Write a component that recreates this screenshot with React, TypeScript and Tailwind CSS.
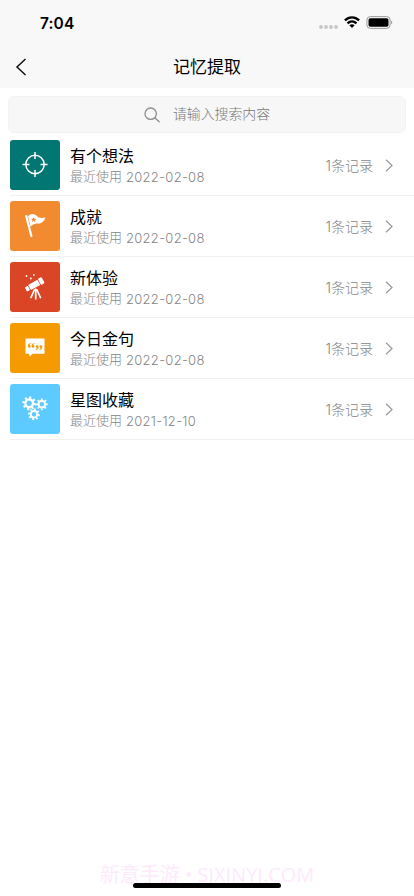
import type { ReactNode } from 'react'

const cjk = "font-['Noto_Sans_CJK_SC',sans-serif]"

function StatusBar() {
  return (
    <div className="flex h-11 items-center pl-10 pr-[21px] pt-0.5">
      <span className="mt-px font-['Inter',sans-serif] text-[15.5px] font-semibold leading-5 tracking-[0.1px] text-black">7:04</span>
      <div className="ml-auto flex items-center">
        <svg width="19" height="4" viewBox="0 0 19 4" className="mt-[7px]" fill="#c6c6c6">
          <circle cx="2" cy="2" r="1.9" />
          <circle cx="7" cy="2" r="1.9" />
          <circle cx="12" cy="2" r="1.9" />
          <circle cx="17" cy="2" r="1.9" />
        </svg>
        <svg width="16" height="12" viewBox="0 0 16 12" className="-mt-0.5 ml-1.5" fill="none" stroke="#000" strokeWidth="2.4">
          <path d="M.9 4.4C5 .3 11 .3 15.1 4.4" />
          <path d="M3.5 7.3C6.2 4.8 9.8 4.8 12.5 7.3" />
          <path d="M8 12 5.4 9.3C7 8 9 8 10.6 9.3Z" fill="#000" stroke="none" />
        </svg>
        <svg width="27" height="13" viewBox="0 0 27 13" className="-mt-px ml-1.5">
          <rect x=".9" y=".6" width="23.2" height="11.8" rx="3.4" fill="none" stroke="#9b9b9b" />
          <rect x="2.5" y="2.2" width="20" height="8.6" rx="1.8" />
          <path d="M25.2 4.6c1.5.6 1.5 3.2 0 3.8Z" fill="#9b9b9b" />
        </svg>
      </div>
    </div>
  )
}

function NavBar() {
  return (
    <div className="grid h-11 grid-cols-[48px_1fr_48px] items-center">
      <svg width="12" height="18" viewBox="0 0 12 18" className="ml-[15px] mt-0.5" fill="none" stroke="#111" strokeWidth="1.5">
        <path d="M10.5 1 2 9l8.5 8" />
      </svg>
      <h1 className={`text-center text-[17px] leading-6 text-black ${cjk}`}>记忆提取</h1>
    </div>
  )
}

function SearchBox() {
  return (
    <div className="mx-2 mt-2 flex h-[37px] items-center justify-center rounded-md border border-[#f3f3f3] bg-[#f7f7f7]">
      <svg width="16" height="16" viewBox="0 0 16 16" className="mr-[13px]" fill="none" stroke="#8c8c8c" strokeWidth="1.3">
        <circle cx="6.7" cy="6.7" r="5.7" />
        <path d="m10.8 10.8 4.4 4" strokeLinecap="round" />
      </svg>
      <span className={`mb-[3px] text-[13.9px] font-light leading-5 text-[#777] ${cjk}`}>请输入搜索内容</span>
    </div>
  )
}

function TargetIcon() {
  return (
    <svg viewBox="0 0 50 50" fill="none" stroke="#fff" strokeWidth="1.5">
      <circle cx="25" cy="24.5" r="9.2" />
      <path d="M25 12v7M25 30v7M12.5 24.5h7M30.5 24.5h7" />
    </svg>
  )
}

function FlagIcon() {
  return (
    <svg viewBox="0 0 50 50" fill="#fff">
      <path d="m16.2 15 5.2 20" stroke="#fff" strokeWidth="2.2" strokeLinecap="round" />
      <path d="M18 15.2c2.5-3.200 6.600-2.800 8.600-.4 1.700 2.200 4.700 2.600 8.800 1.800-1 3.700-3.700 6.100-7 6-3.300-.2-5.700.7-7.800 3.200Z" />
      <path d="m23.7 16.2.8 1.600 1.800.1-1.300 1.300.4 1.800-1.700-.9-1.600 1 .3-1.900-1.300-1.200 1.800-.3Z" fill="#f28b30" />
    </svg>
  )
}

function TelescopeIcon() {
  return (
    <svg viewBox="0 0 50 50" fill="#fff">
      <circle cx="16.5" cy="14" r=".9" />
      <circle cx="23.8" cy="12.9" r=".9" />
      <circle cx="20.8" cy="16.5" r=".9" />
      <g transform="rotate(-29 24.5 22.5)">
        <rect x="14.5" y="20.3" width="3.5" height="4.8" rx="1" />
        <rect x="18.7" y="19.8" width="10.6" height="5.8" rx=".5" />
        <rect x="30" y="19.2" width="4.2" height="7" rx="1.2" />
      </g>
      <path d="m24.3 28-3.300 7.500M25.700 27v9.800M27 28l3.400 7.500" stroke="#fff" strokeWidth="1.7" strokeLinecap="round" />
    </svg>
  )
}

function QuoteIcon() {
  return (
    <svg viewBox="0 0 50 50" fill="#fff">
      <path d="M15.5 15.500h19v15.200H22.800L19.500 33.600 19 30.700h-3.500Z" />
      <g fill="#f59a00">
        <path d="M20.7 20c-1.800.3-2.800 1.500-2.800 3.300a1.400 1.400 0 1 0 1.600-1.400c.1-.6.500-.9 1.200-1.100Z" />
        <path d="M24.4 20c-1.800.3-2.800 1.500-2.800 3.300a1.400 1.400 0 1 0 1.600-1.400c.1-.6.500-.9 1.200-1.100Z" />
        <path d="M25.8 27c1.800-.3 2.800-1.500 2.800-3.300a1.400 1.400 0 1 0-1.600 1.400c-.1.600-.5.900-1.200 1.100Z" />
        <path d="M29.5 27c1.800-.3 2.800-1.500 2.800-3.300a1.400 1.400 0 1 0-1.600 1.400c-.1.600-.5.900-1.200 1.100Z" />
      </g>
    </svg>
  )
}

function Gear({ x, y, r, turn }: { x: number; y: number; r: number; turn: number }) {
  return (
    <g transform={`translate(${x} ${y}) rotate(${turn}) scale(${r / 7})`}>
      <circle r="3.9" strokeWidth="2.4" />
      {/* eight teeth around the ring */}
      {[0, 45, 90, 135, 180, 225, 270, 315].map((a) => (
        <path key={a} d="M0-4.600v-2.400" strokeWidth="2.1" transform={`rotate(${a})`} />
      ))}
    </g>
  )
}

function GearsIcon() {
  return (
    <svg viewBox="0 0 50 50" fill="none" stroke="#fff">
      <Gear x={19.2} y={19.3} r={6.9} turn={10} />
      <Gear x={31.8} y={20.3} r={5.9} turn={0} />
      <Gear x={24} y={30.3} r={5.9} turn={10} />
    </svg>
  )
}

type Item = { title: string; date: string; bg: string; icon: ReactNode }

const items: Item[] = [
  { title: '有个想法', date: '2022-02-08', bg: 'bg-[#027672]', icon: <TargetIcon /> },
  { title: '成就', date: '2022-02-08', bg: 'bg-[#f28b30]', icon: <FlagIcon /> },
  { title: '新体验', date: '2022-02-08', bg: 'bg-[#da4525]', icon: <TelescopeIcon /> },
  { title: '今日金句', date: '2022-02-08', bg: 'bg-[#f59a00]', icon: <QuoteIcon /> },
  { title: '星图收藏', date: '2021-12-10', bg: 'bg-[#5dcbff]', icon: <GearsIcon /> },
]

function Row({ item }: { item: Item }) {
  return (
    <li className={`ml-2.5 flex h-[61px] items-center border-b border-[#f0f0f0] pr-[21px] ${cjk}`}>
      <div className={`size-[50px] shrink-0 overflow-hidden rounded-[3px] ${item.bg}`}>{item.icon}</div>
      <div className="ml-2.5 flex flex-col">
        <span className="text-[16px] leading-[22px] text-black">{item.title}</span>
        <span className="flex gap-1 text-[13px] font-light leading-5 text-[#858585]">
          最近使用
          <span className="pt-px font-['Inter',sans-serif] tracking-[0.29px]">{item.date}</span>
        </span>
      </div>
      <span className="ml-auto text-[14px] font-light leading-5 text-[#858585]">
        <span className="font-['Inter',sans-serif]">1</span>条记录
      </span>
      <svg width="8" height="13" viewBox="0 0 8 13" className="ml-3" fill="none" stroke="#999" strokeWidth="1.2">
        <path d="m1 .8 6 5.700-6 5.700" />
      </svg>
    </li>
  )
}

export default function App() {
  return (
    <main className="flex h-[896px] w-[414px] flex-col overflow-hidden bg-white">
      <header className="bg-[#f8f8f8]">
        <StatusBar />
        <NavBar />
      </header>
      <SearchBox />
      <ul className="mt-0.5">
        {items.map((item) => (
          <Row key={item.title} item={item} />
        ))}
      </ul>
      <footer className="relative mt-auto h-9">
        <p className="whitespace-nowrap pt-px text-center font-['Open_Sans','Noto_Sans_CJK_SC',sans-serif] text-[20px] leading-7 text-[#fdeafb]">
          新意手游 • SJXINYI.COM
        </p>
        <div className="absolute bottom-2 left-[133px] h-[5px] w-[148px] rounded-full bg-black" />
      </footer>
    </main>
  )
}
